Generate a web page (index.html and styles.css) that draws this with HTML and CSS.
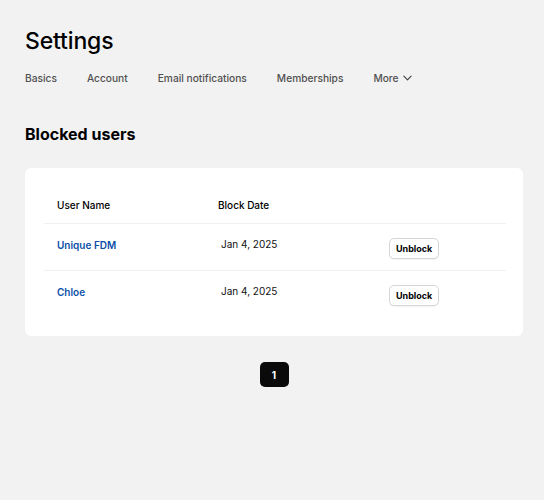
FILE: index.html
```html
<!DOCTYPE html>
<html>
<head>
<meta charset="utf-8">
<link rel="stylesheet" href="styles.css">
</head>
<body>
<div class="page">
  <h1 class="title">Settings</h1>
  <nav class="tabs">
    <a class="tab">Basics</a>
    <a class="tab">Account</a>
    <a class="tab">Email notifications</a>
    <a class="tab">Memberships</a>
    <a class="tab more">More
      <svg class="chev" width="10" height="6" viewBox="0 0 10 6"><path d="M1 1 L5 5 L9 1" fill="none" stroke="#444" stroke-width="1.3" stroke-linecap="round" stroke-linejoin="round"/></svg>
    </a>
  </nav>
  <h2 class="section">Blocked users</h2>
  <div class="card">
    <div class="users">
      <div class="row head">
        <div class="cell">User Name</div>
        <div class="cell">Block Date</div>
        <div class="cell"></div>
      </div>
      <div class="row item">
        <div class="cell"><a class="name">Unique FDM</a></div>
        <div class="cell"><span class="date">Jan 4, 2025</span></div>
        <div class="cell"><button class="btn">Unblock</button></div>
      </div>
      <div class="row item last">
        <div class="cell"><a class="name">Chloe</a></div>
        <div class="cell"><span class="date">Jan 4, 2025</span></div>
        <div class="cell"><button class="btn">Unblock</button></div>
      </div>
    </div>
  </div>
  <div class="pager"><span class="pg">1</span></div>
</div>
</body>
</html>
```
FILE: styles.css
```css
html, body { margin: 0; padding: 0; }
body {
  background: #f2f2f2;
  font-family: Inter, "Noto Sans", sans-serif;
  color: #000;
}
.page { padding: 27px 21px 0 25px; }
.title {
  margin: 0;
  font-size: 23px;
  font-weight: 500;
  line-height: 28px;
  letter-spacing: -0.15px;
}
.tabs {
  display: flex;
  gap: 30px;
  margin-top: 16px;
  height: 14px;
  align-items: center;
}
.tab {
  font-size: 10.2px;
  line-height: 14px;
  font-weight: 500;
  color: #505050;
  display: flex;
  align-items: center;
  gap: 4px;
}
.chev { display: block; width: 9px; height: 6px; }
.section {
  margin: 39px 0 0;
  font-size: 16px;
  font-weight: 700;
  line-height: 20px;
}
.card {
  margin-top: 24px;
  background: #fff;
  border-radius: 6px;
  padding: 18px 17px 18px 19px;
}
.row {
  display: grid;
  grid-template-columns: 161px 171px 1fr;
  box-sizing: border-box;
  border-bottom: 1px solid #f0f0f0;
}
.row.last { border-bottom: none; }
.cell { padding: 0 13px; }
.head {
  height: 38px;
  align-items: center;
  font-size: 10px;
  font-weight: 500;
  line-height: 12px;
}
.item {
  height: 47px;
  padding-top: 14px;
  align-items: start;
  font-size: 10px;
}
.name {
  display: block;
  color: #0b4fa8;
  font-weight: 600;
  line-height: 15px;
}
.date {
  display: block;
  padding-left: 3px;
  line-height: 12px;
  font-weight: 400;
  color: #111;
}
.btn {
  display: block;
  font-family: inherit;
  font-size: 9px;
  font-weight: 700;
  color: #000;
  background: #fff;
  border: 1px solid #d6d6d6;
  border-radius: 5px;
  height: 21px;
  padding: 0 6px;
  box-shadow: 0 1px 1px rgba(0,0,0,0.05);
}
.pager {
  display: flex;
  justify-content: center;
  margin-top: 26px;
}
.pg {
  width: 29px;
  height: 25px;
  background: #0a0a0a;
  color: #fff;
  border-radius: 5px;
  font-size: 10px;
  font-weight: 700;
  display: flex;
  align-items: center;
  justify-content: center;
}
```
